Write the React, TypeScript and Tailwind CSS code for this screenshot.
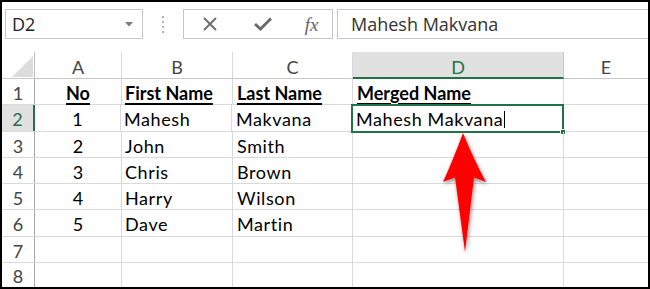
import React from "react";

const W = [33, 87, 111, 120, 211];
const rowH = [26, 27, 26, 26, 26, 27, 26, 25];

const data: [string, string, string, string][] = [
  ["No", "First Name", "Last Name", "Merged Name"],
  ["1", "Mahesh", "Makvana", "Mahesh Makvana"],
  ["2", "John", "Smith", ""],
  ["3", "Chris", "Brown", ""],
  ["4", "Harry", "Wilson", ""],
  ["5", "Dave", "Martin", ""],
  ["", "", "", ""],
  ["", "", "", ""],
];

const cellFont = { fontFamily: "Lato, 'Liberation Sans', sans-serif" };
const uiFont = { fontFamily: "'Open Sans', 'Noto Sans', sans-serif" };

export default function App() {
  return (
    <div className="w-[650px] h-[289px] overflow-hidden border-2 border-black bg-white relative flex flex-col">
      {/* Toolbar */}
      <div className="h-[50px] shrink-0 flex items-start pt-[7px] pl-[3px]" style={uiFont}>
        <div className="w-[138px] h-[30px] border border-[#c6c6c6] flex items-center pl-[6px] pr-[9px] justify-between">
          <span className="text-[18px] text-[#222] leading-none">D2</span>
          <svg width="8" height="5" viewBox="0 0 8 5"><path d="M0 0 L8 0 L4 4.5 Z" fill="#7a7a7a" /></svg>
        </div>
        <div className="w-[40px] h-[30px] flex flex-col items-center justify-center gap-[3px]">
          <div className="w-[2px] h-[2px] bg-[#b0b0b0]" />
          <div className="w-[2px] h-[2px] bg-[#b0b0b0]" />
          <div className="w-[2px] h-[2px] bg-[#b0b0b0]" />
          <div className="w-[2px] h-[2px] bg-[#b0b0b0]" />
        </div>
        <div className="w-[150px] h-[30px] border border-[#c6c6c6] flex items-center">
          <div className="w-[50px] flex justify-center pl-[2px]">
            <svg width="16" height="16" viewBox="0 0 16 16"><path d="M2 2 L14 14 M14 2 L2 14" stroke="#6a6a6a" strokeWidth="1.8" /></svg>
          </div>
          <div className="w-[50px] flex justify-center pl-[8px]">
            <svg width="18" height="14" viewBox="0 0 18 14"><path d="M1 7 L6.5 12 L17 1.5" stroke="#6a6a6a" strokeWidth="3" fill="none" /></svg>
          </div>
          <div className="w-[45px] flex justify-center pl-[10px]">
            <span className="italic text-[19px] text-[#666] leading-none" style={{ fontFamily: "'Liberation Serif', 'DejaVu Serif', serif" }}>fx</span>
          </div>
        </div>
        <div className="ml-[4px] flex-1 h-[30px] border border-[#c6c6c6] border-r-0 flex items-center pl-[13px]">
          <span className="text-[18px] text-[#333] leading-none">Mahesh Makvana</span>
        </div>
      </div>

      {/* Column header */}
      <div className="h-[27px] shrink-0 flex border-b border-[#c8c8c8]" style={cellFont}>
        <div className="shrink-0 border-r border-[#bdbdbd] relative" style={{ width: W[0] }}>
          <svg className="absolute left-[10px] top-[4px]" width="21" height="21" viewBox="0 0 21 21"><path d="M21 0 L21 21 L0 21 Z" fill="#dcdcdc" /></svg>
        </div>
        {["A", "B", "C"].map((l, i) => (
          <div key={l} className="shrink-0 border-r border-[#d9d9d9] flex items-end justify-center pb-[2px] text-[18px] text-[#444] leading-none" style={{ width: W[i + 1] }}>
            {l}
          </div>
        ))}
        <div className="shrink-0 border-r border-[#c8c8c8] bg-[#e1e1e1] border-b-2 border-b-[#217346] -mb-px flex items-end justify-center pb-[1px] text-[18px] text-[#217346] leading-none" style={{ width: W[4] }}>
          D
        </div>
        <div className="flex-1 flex items-end justify-center pb-[2px] text-[18px] text-[#444] leading-none">E</div>
      </div>

      {/* Rows */}
      <div className="flex-1 flex flex-col overflow-hidden" style={cellFont}>
        {data.map((r, ri) => {
          const sel = ri === 1;
          const bold = ri === 0;
          const txt = bold ? "font-bold" : "tracking-[0.6px]";
          return (
            <div key={ri} className="shrink-0 flex border-b border-[#d9d9d9]" style={{ height: rowH[ri] }}>
              <div
                className={
                  "shrink-0 flex items-center justify-center text-[18px] leading-none pt-[2px] " +
                  (sel ? "bg-[#e1e1e1] text-[#217346] border-r-2 border-[#217346]" : "text-[#444] border-r border-[#a8a8a8]")
                }
                style={{ width: W[0] }}
              >
                {ri + 1}
              </div>
              <div className={"shrink-0 border-r border-[#d9d9d9] flex items-center justify-center text-[18px] text-black leading-none pt-[2px] " + (bold ? "font-bold underline underline-offset-[3px] decoration-[1.5px]" : "")} style={{ width: W[1] - (sel ? 1 : 0) }}>
                {r[0]}
              </div>
              <div className={"shrink-0 border-r border-[#d9d9d9] flex items-center pl-[3px] text-[18px] text-black leading-none pt-[2px] " + txt} style={{ width: W[2] }}>
                <span className={bold ? "underline underline-offset-[3px] decoration-[1.5px]" : ""}>{r[1]}</span>
              </div>
              <div className={"shrink-0 border-r border-[#d9d9d9] flex items-center pl-[4px] text-[18px] text-black leading-none pt-[2px] " + txt} style={{ width: W[3] }}>
                <span className={bold ? "underline underline-offset-[3px] decoration-[1.5px]" : ""}>{r[2]}</span>
              </div>
              <div className={"shrink-0 border-r border-[#d9d9d9] flex items-center pl-[4px] text-[18px] text-black leading-none pt-[2px] relative " + txt} style={{ width: W[4] }}>
                <span className={bold ? "underline underline-offset-[3px] decoration-[1.5px]" : ""}>{r[3]}</span>
                {sel && <span className="w-px h-[17px] bg-black ml-[1px]" />}
                {sel && (
                  <div className="absolute -left-[1px] -top-[1px] w-[213px] h-[29px] border-2 border-[#217346]">
                    <div className="absolute -right-[4px] -bottom-[4px] w-[6px] h-[6px] bg-[#217346] border border-white" />
                  </div>
                )}
              </div>
              <div className="flex-1" />
            </div>
          );
        })}
      </div>

      {/* Arrow */}
      <svg className="absolute left-0 top-0 pointer-events-none" width="650" height="289" viewBox="2 2 650 289">
        <defs>
          <filter id="sh" x="-50%" y="-20%" width="200%" height="150%">
            <feDropShadow dx="1" dy="2" stdDeviation="2.2" floodColor="#000" floodOpacity="0.45" />
          </filter>
        </defs>
        <path
          d="M463 133 Q474 160 486 182 L474 177.5 L465 252 L455 177.5 L443 182 Q453 160 463 133 Z"
          fill="#ff0000"
          filter="url(#sh)"
        />
      </svg>
    </div>
  );
}
